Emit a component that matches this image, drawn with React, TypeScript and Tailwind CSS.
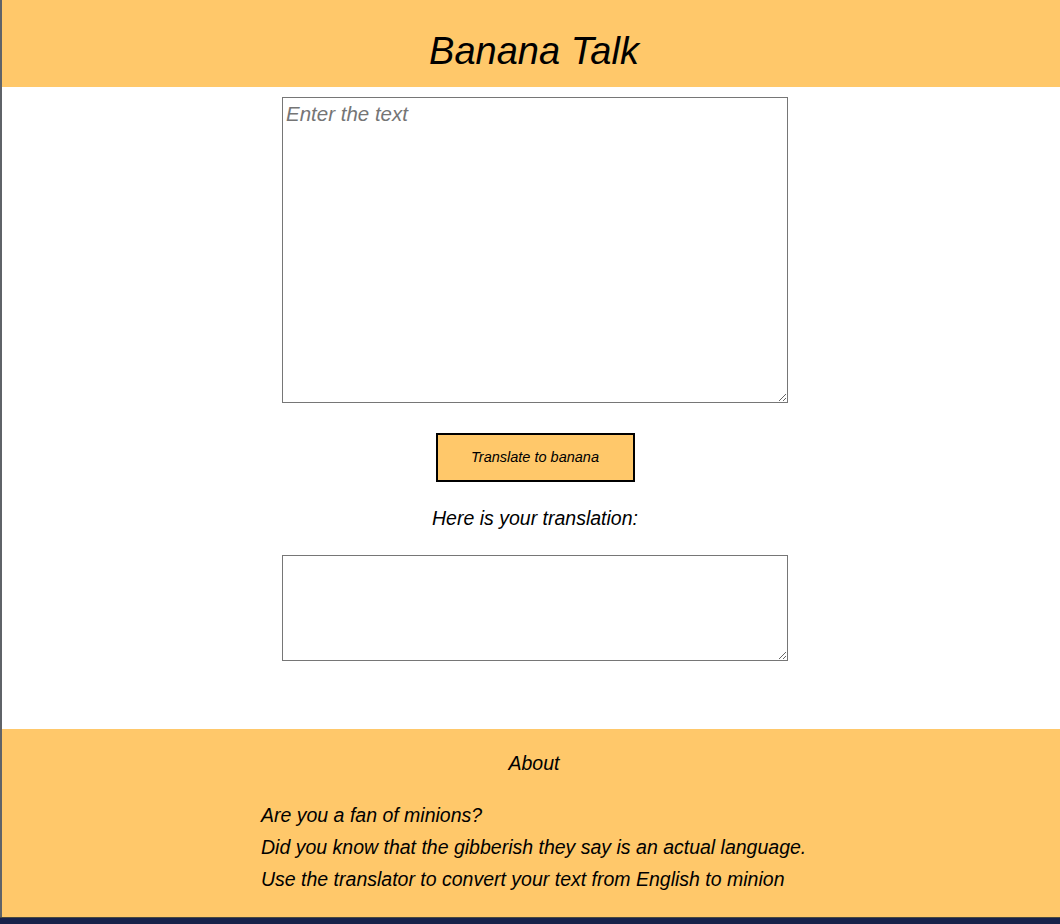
import React from "react";

const hand = { fontFamily: '"Liberation Sans", Arial, sans-serif' };

export default function App() {
  return (
    <div className="flex h-[924px] w-[1060px] flex-col overflow-hidden bg-white italic text-black" style={hand}>
      <div className="flex flex-1 flex-col border-l-2 border-[#5f6368]">
        <header className="flex h-[87px] items-center justify-center bg-[#ffc86a] pl-[6px] pt-[14px]">
          <h1 className="text-[38px] leading-none">Banana Talk</h1>
        </header>

        <main className="flex flex-1 flex-col items-center pl-[8px] pt-[10px]">
          <textarea
            placeholder="Enter the text"
            className="h-[306px] w-[506px] resize border border-[#767676] px-[3px] py-[1px] text-[20.5px] italic placeholder:text-[#757575] focus:outline-none"
            style={hand}
          />
          <button className="mt-[30px] h-[49px] w-[199px] border-2 border-black bg-[#ffc86a] text-[14.5px] italic">
            Translate to banana
          </button>
          <p className="mt-[21px] text-[19.5px] leading-[30px]">Here is your translation:</p>
          <textarea
            className="mt-[22px] h-[106px] w-[506px] resize border border-[#767676] focus:outline-none"
            style={hand}
          />
        </main>

        <footer className="flex h-[188px] flex-col bg-[#ffc86a] pt-[19px]">
          <h2 className="pl-[6px] text-center text-[19.5px] leading-[30px]">About</h2>
          <div className="ml-[259px] mt-[21px] flex flex-col text-[19.5px] leading-[32px]">
            <p>Are you a fan of minions?</p>
            <p>Did you know that the gibberish they say is an actual language.</p>
            <p>Use the translator to convert your text from English to minion</p>
          </div>
        </footer>
      </div>
      <div className="h-[7px] border-t border-[#4a4a40] bg-[#18224a]" />
    </div>
  );
}
